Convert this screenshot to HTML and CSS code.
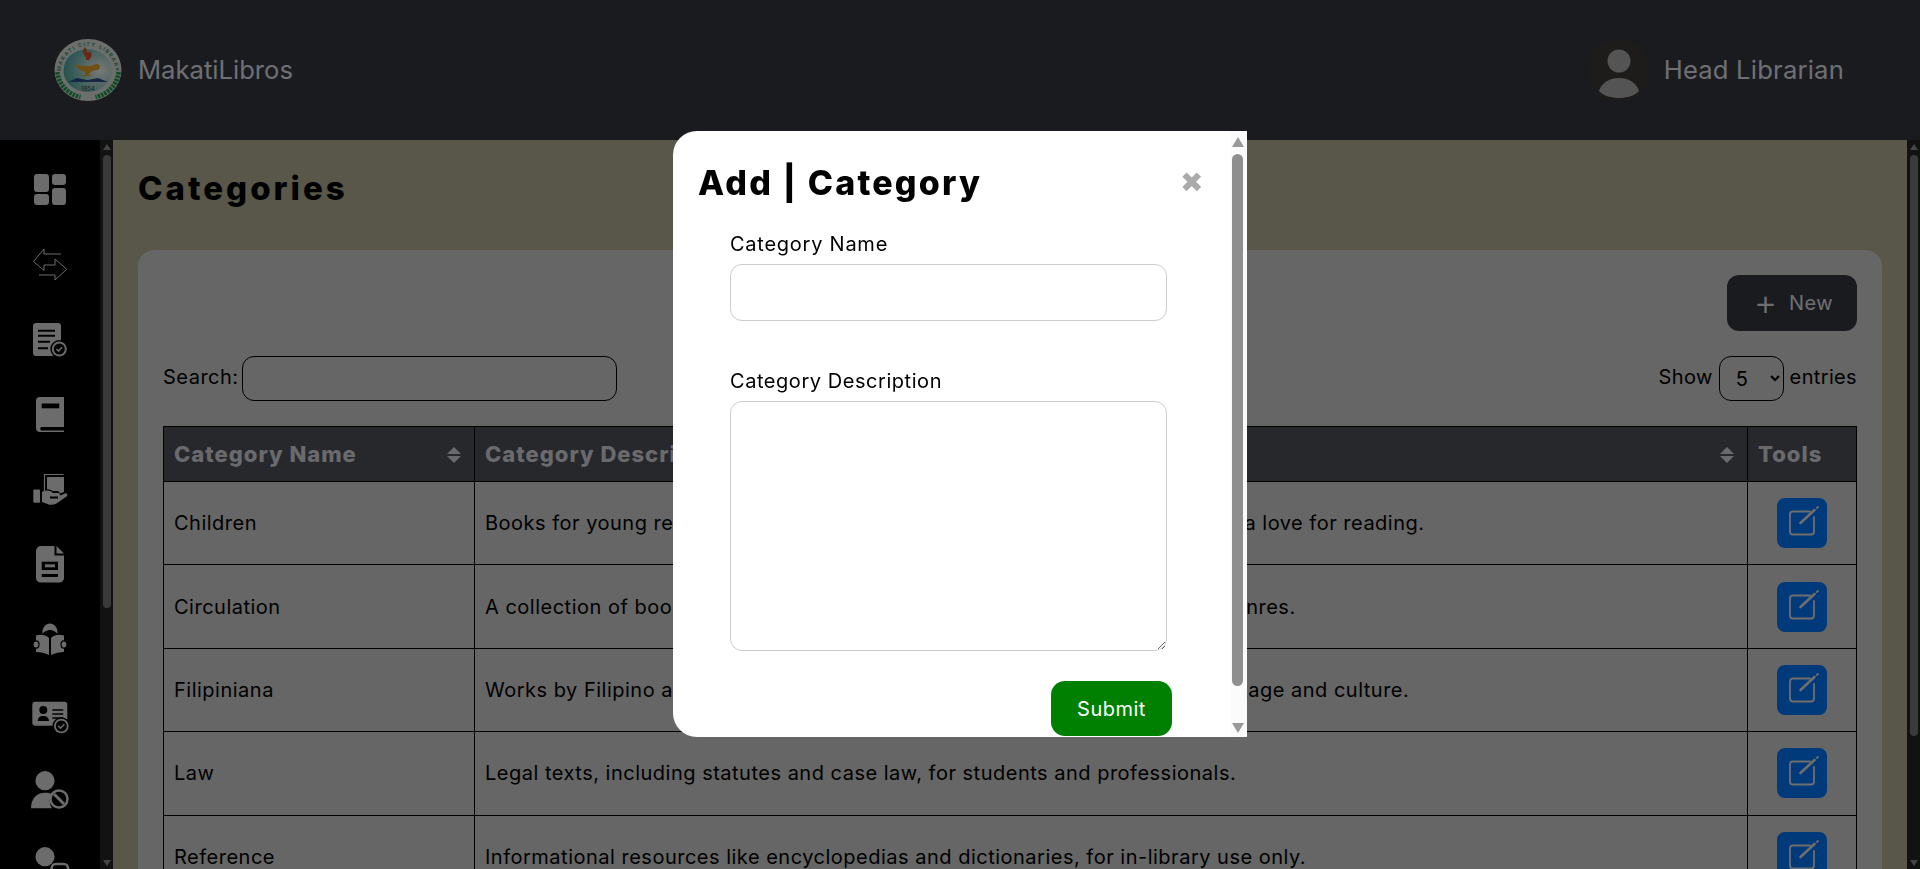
FILE: index.html
```html
<!DOCTYPE html>
<html lang="en">
<head>
    <meta charset="UTF-8">
    <meta name="viewport" content="width=device-width, initial-scale=1.0">
    <title>Categories</title>
    <link rel="stylesheet" href="styles.css">
</head>
<body>
    <header class="topbar">
        <div class="brand">
            <svg class="logo" viewBox="0 0 68 62">
                <defs>
                    <path id="sealArc" d="M6.5 34a27.5 27 0 0 1 55 0"/>
                    <radialGradient id="sealFill" cx="0.75" cy="0.5" r="0.8">
                        <stop offset="0" stop-color="#f2f2ee"/>
                        <stop offset="1" stop-color="#3d9f98"/>
                    </radialGradient>
                </defs>
                <ellipse cx="34" cy="31" rx="33.5" ry="31" fill="#d6dcd6"/>
                <text class="logo-text"><textPath href="#sealArc" textLength="82" startOffset="2%">MAKATI CITY LIBRARY</textPath></text>
                <ellipse cx="33.5" cy="31.5" rx="24" ry="21.5" fill="url(#sealFill)"/>
                <path d="M3.5 33c1 12 10 22 23 25M64.5 33c-1 12-10 22-23 25" fill="none" stroke="#1f9a4d" stroke-width="4.5" stroke-dasharray="2.5 1"/>
                <path d="M31 8c-2 3-3 5 0 9 1 2 1 3 1 4h3c3-3 4-7 0-9 0 2-1 2-2 1 0-2-1-3-2-5z" fill="#d9502a"/>
                <path d="M20 25c4 1 8 2 11 2h6c2-1 4-2 6-2 4 0 4 5 0 6l-5 1c-1 1-2 2-3 2v2h2v1H28v-1h3v-3c-4-1-8-4-11-8z" fill="#dd9f28"/>
                <path d="M14 43l9-4 10 2 1 0 10-2 10 4z" fill="#2c4f86"/>
                <text class="logo-year" x="34" y="52" text-anchor="middle">1954</text>
            </svg>
            <span class="brand-name">MakatiLibros</span>
        </div>
        <div class="user">
            <svg class="avatar" viewBox="0 0 64 64">
                <circle cx="32" cy="32" r="31" fill="#3b3935"/>
                <circle cx="32" cy="23" r="11.5" fill="#a8a8a8"/>
                <path d="M12 53c3-9 11-13 20-13s17 4 20 13c-5 5-12 7-20 7s-15-2-20-7z" fill="#a8a8a8"/>
            </svg>
            <span class="user-name">Head Librarian</span>
        </div>
    </header>

    <div class="layout">
        <nav class="sidebar">
            <a class="nav-item"><svg viewBox="0 0 38 38"><rect x="3" y="3" width="15" height="18" rx="3"/><rect x="21" y="3" width="14" height="11" rx="3"/><rect x="3" y="23" width="15" height="11" rx="3"/><rect x="21" y="17" width="14" height="17" rx="3"/></svg></a>
            <a class="nav-item"><svg viewBox="0 0 38 38" class="line-icon"><path d="M30 8H13V3L2.5 15.5 13 24.5V19h11"/><path d="M8 29h16v5l11.7-10.7L24 13v6"/></svg></a>
            <a class="nav-item"><svg viewBox="0 0 38 38"><rect x="2" y="2" width="28" height="33" rx="3"/><path class="cut" d="M7 9.7h17M7 14.7h17M7 20.7h12M7 27.3h10"/><circle class="cut-fill" cx="28.3" cy="28" r="9"/><circle cx="28.3" cy="28" r="7.5"/><circle class="cut-fill" cx="28.3" cy="28" r="5.5"/><path class="mark" d="M25.5 28l2 2 3.5-3.7"/></svg></a>
            <a class="nav-item"><svg viewBox="0 0 38 38"><path d="M9 1h24v30H10a2.5 2.5 0 0 0 0 3.5h23V36H9a4 4 0 0 1-4-4V5a4 4 0 0 1 4-4z"/><rect class="cut-fill" x="10.7" y="7.5" width="17.6" height="4.8"/></svg></a>
            <a class="nav-item"><svg viewBox="0 1 38 38"><path class="stroke" d="M13.5 22V4.5h19"/><path d="M16 7h17v15l-4 1.500c-.5-1.500-1.500-2.500-3-2.500h-4c-1.300-1-2.800-1.500-6-1.800z"/><rect x="2.300" y="19.500" width="6.700" height="13.200" rx="1"/><path d="M11 22c4-2 8-2 11 1h5c1.500 0 2.200 1.200 2 2.400l5-2c2-.6 3.400 1.800 1.500 3l-10 7c-3 1.600-6 2-9 .6l-5.500-2z"/><path class="cut" d="M19 27.500h8"/></svg></a>
            <a class="nav-item"><svg viewBox="0 1 38 38"><path d="M10 1h13.500v9.500H33V33a4.600 4.600 0 0 1-4.600 4.600H9.600A4.600 4.600 0 0 1 5 33V6a5 5 0 0 1 5-5z"/><path d="M25.500 1L33 8.500h-7.500z"/><rect class="cut-fill" x="10.700" y="16.700" width="16.300" height="8.300"/><rect x="14" y="19.300" width="10" height="3"/><rect class="cut-fill" x="10.700" y="29" width="16.300" height="3"/></svg></a>
            <a class="nav-item"><svg viewBox="0 1 38 38"><path d="M11.500 14c-.5-7 3.500-10.500 7.500-10.500S27 7 26.500 14c-2-3-5-4-7.500-4s-5.500 1-7.500 4z"/><path d="M5 15.500c5-1.500 10-.5 13 2.500v17c-4-2-9-3-13-3z"/><path d="M33 15.500c-5-1.500-10-.5-13 2.500v17c4-2 9-3 13-3z"/><ellipse class="hand" cx="5" cy="24.500" rx="3" ry="3.600"/><ellipse class="hand" cx="33" cy="24.500" rx="3" ry="3.600"/></svg></a>
            <a class="nav-item"><svg viewBox="0 -4 38 38"><rect x="1.300" y="1.700" width="35" height="24" rx="3"/><circle class="cut-fill" cx="12.300" cy="10" r="4"/><path class="cut-fill" d="M6.700 21c.5-4 2.500-5 5.600-5s5.200 1 5.700 5z"/><path class="cut thin" d="M21.300 10h11M21.300 14h11M21.300 18h11"/><circle class="cut-fill" cx="30.300" cy="26" r="8.800"/><circle cx="30.300" cy="26" r="7.300"/><circle class="cut-fill" cx="30.300" cy="26" r="5.500"/><path class="mark" d="M27.300 26l2.200 2.200 3.800-4"/></svg></a>
            <a class="nav-item"><svg viewBox="0 1 38 38"><circle cx="14" cy="10.700" r="9.600"/><path d="M0 38.300c0-10 6-15.600 14-15.600 3 0 5 .5 7 1.300-3 4-3 10 0 14.300z"/><circle class="ring" cx="28" cy="29" r="8.500"/><path class="bar" d="M23 24l10 10"/></svg></a>
            <a class="nav-item"><svg viewBox="0 0 38 38"><circle cx="14" cy="10.700" r="9.600"/><path d="M0 38c0-9 6-14 14-14h6v14z"/><rect class="ring" x="20.700" y="18" width="16.300" height="16" rx="4"/></svg></a>
        </nav>
        <div class="scrollbar scrollbar-nav">
            <span class="arrow-up"></span>
            <span class="thumb"></span>
            <span class="arrow-down"></span>
        </div>

        <main class="content">
            <h1 class="page-title">Categories</h1>
            <section class="card">
                <div class="card-actions">
                    <button class="btn-new"><span class="plus">+</span> New</button>
                </div>
                <div class="table-controls">
                    <label class="search">Search: <input type="text"></label>
                    <label class="entries">Show <select><option>5</option></select> entries</label>
                </div>
                <table class="data-table">
                    <thead>
                        <tr>
                            <th class="col-name">Category Name<span class="sort"></span></th>
                            <th>Category Description<span class="sort"></span></th>
                            <th class="col-tools">Tools</th>
                        </tr>
                    </thead>
                    <tbody>
                        <tr>
                            <td>Children</td>
                            <td>Books for young readers, including picture books and storybooks, to inspire a love for reading.</td>
                            <td class="col-tools"><a class="btn-edit"><svg viewBox="0 0 50 50"><path d="M33 13.500H16a3 3 0 0 0-3 3V33.500a3 3 0 0 0 3 3h18a3 3 0 0 0 3-3V19"/><path class="pen" d="M23.500 25L37.500 12"/><path d="M39.800 10L41 9"/></svg></a></td>
                        </tr>
                        <tr>
                            <td>Circulation</td>
                            <td>A collection of books for borrowing, across a wider range of subjects and genres.</td>
                            <td class="col-tools"><a class="btn-edit"><svg viewBox="0 0 50 50"><path d="M33 13.500H16a3 3 0 0 0-3 3V33.500a3 3 0 0 0 3 3h18a3 3 0 0 0 3-3V19"/><path class="pen" d="M23.500 25L37.500 12"/><path d="M39.800 10L41 9"/></svg></a></td>
                        </tr>
                        <tr>
                            <td>Filipiniana</td>
                            <td>Works by Filipino authors and books about the Philippines, their history, heritage and culture.</td>
                            <td class="col-tools"><a class="btn-edit"><svg viewBox="0 0 50 50"><path d="M33 13.500H16a3 3 0 0 0-3 3V33.500a3 3 0 0 0 3 3h18a3 3 0 0 0 3-3V19"/><path class="pen" d="M23.500 25L37.500 12"/><path d="M39.800 10L41 9"/></svg></a></td>
                        </tr>
                        <tr>
                            <td>Law</td>
                            <td>Legal texts, including statutes and case law, for students and professionals.</td>
                            <td class="col-tools"><a class="btn-edit"><svg viewBox="0 0 50 50"><path d="M33 13.500H16a3 3 0 0 0-3 3V33.500a3 3 0 0 0 3 3h18a3 3 0 0 0 3-3V19"/><path class="pen" d="M23.500 25L37.500 12"/><path d="M39.800 10L41 9"/></svg></a></td>
                        </tr>
                        <tr>
                            <td>Reference</td>
                            <td>Informational resources like encyclopedias and dictionaries, for in-library use only.</td>
                            <td class="col-tools"><a class="btn-edit"><svg viewBox="0 0 50 50"><path d="M33 13.500H16a3 3 0 0 0-3 3V33.500a3 3 0 0 0 3 3h18a3 3 0 0 0 3-3V19"/><path class="pen" d="M23.500 25L37.500 12"/><path d="M39.800 10L41 9"/></svg></a></td>
                        </tr>
                    </tbody>
                </table>
            </section>
        </main>
        <div class="scrollbar scrollbar-main">
            <span class="arrow-up"></span>
            <span class="thumb"></span>
            <span class="arrow-down"></span>
        </div>
    </div>

    <div class="overlay">
        <div class="modal">
            <div class="modal-body">
                <div class="modal-head">
                    <h2 class="modal-title">Add | Category</h2>
                    <span class="modal-close">&#10006;</span>
                </div>
                <form class="modal-form">
                    <label class="field-label">Category Name</label>
                    <input class="field-input" type="text">
                    <label class="field-label field-gap">Category Description</label>
                    <textarea class="field-area"></textarea>
                    <div class="form-actions">
                        <button class="btn-submit" type="button">Submit</button>
                    </div>
                </form>
            </div>
            <div class="modal-scroll">
                <span class="arrow-up"></span>
                <span class="thumb"></span>
                <span class="arrow-down"></span>
            </div>
        </div>
    </div>
</body>
</html>
```

FILE: styles.css
```css
/* Reset dan Gaya Dasar */
* {
    box-sizing: border-box;
}

html, body {
    height: 100%;
}

body {
    margin: 0;
    overflow: hidden;
    font-family: Inter, "Noto Sans", sans-serif;
    font-size: 20px;
    letter-spacing: 0.5px;
    color: #000;
    background: #b0ae92;
}

/* Header */
.topbar {
    height: 140px;
    padding: 0 76px 0 54px;
    display: flex;
    align-items: center;
    justify-content: space-between;
    background: #34363e;
}

.brand, .user {
    display: flex;
    align-items: center;
}

.logo {
    width: 68px;
    height: 62px;
    margin-right: 16px;
}

.logo-text {
    font-size: 5.2px;
    font-weight: 700;
    letter-spacing: 0;
    fill: #3b8f6a;
}

.logo-year {
    font-size: 6px;
    letter-spacing: 0;
    fill: #444;
}

.brand-name, .user-name {
    margin-top: -2px;
    font-size: 25.6px;
    letter-spacing: 0;
    color: #dedfe4;
}

.user-name {
    letter-spacing: 0.2px;
}

.avatar {
    width: 64px;
    height: 64px;
    margin-right: 13px;
}

/* Layout */
.layout {
    height: calc(100% - 140px);
    display: flex;
}

.sidebar {
    width: 100px;
    flex: none;
    padding-top: 12.5px;
    background: #000;
    overflow: hidden;
}

.nav-item {
    height: 75px;
    display: flex;
    align-items: center;
    justify-content: center;
}

.nav-item svg {
    width: 38px;
    height: 38px;
    overflow: visible;
    fill: #d8d8d8;
}

.nav-item .line-icon {
    fill: none;
    stroke: #d8d8d8;
    stroke-width: 1;
}

.nav-item .cut {
    fill: none;
    stroke: #000;
    stroke-width: 2;
}

.nav-item .cut.thin {
    stroke-width: 1.5;
}

.nav-item .cut-fill {
    fill: #000;
}

.nav-item .mark {
    fill: none;
    stroke: #d8d8d8;
    stroke-width: 1.6;
}

.nav-item .stroke {
    fill: none;
    stroke: #d8d8d8;
    stroke-width: 1.2;
}

.nav-item .hand {
    stroke: #000;
    stroke-width: 1.2;
}

.nav-item .ring {
    fill: #000;
    stroke: #d8d8d8;
    stroke-width: 2.5;
}

.nav-item .bar {
    fill: none;
    stroke: #d8d8d8;
    stroke-width: 3;
}

/* Scrollbars */
.scrollbar {
    width: 13px;
    flex: none;
    display: flex;
    flex-direction: column;
    align-items: center;
    padding: 4px 0 3px;
    background: #242424;
}

.scrollbar .thumb {
    width: 8px;
    margin-top: 5px;
    border-radius: 4px;
    background: #747474;
}

.scrollbar-nav .thumb {
    height: 453px;
}

.scrollbar-main .thumb {
    height: 581px;
}

.scrollbar .arrow-down {
    margin-top: auto;
}

.arrow-up {
    width: 0;
    height: 0;
    border: 4.5px solid transparent;
    border-top: 0;
    border-bottom: 6px solid #8a8a8a;
}

.arrow-down {
    width: 0;
    height: 0;
    border: 4.5px solid transparent;
    border-bottom: 0;
    border-top: 6px solid #8a8a8a;
}

/* Content */
.content {
    flex: 1;
    min-width: 0;
    padding: 24px 25px 0;
    overflow: hidden;
    background: #b0ae92;
}

.page-title {
    margin: 0 0 38px;
    height: 48px;
    line-height: 48px;
    font-size: 33px;
    font-weight: 800;
    letter-spacing: 3px;
}

.card {
    padding: 25px 25px 0;
    border-radius: 16px 16px 0 0;
    background: #ccc;
}

.card-actions {
    display: flex;
    justify-content: flex-end;
}

.btn-new {
    width: 130px;
    height: 56px;
    border: 0;
    border-radius: 12px;
    font: inherit;
    letter-spacing: inherit;
    color: #dedfe4;
    background: #34363e;
}

.plus {
    margin-right: 5px;
    margin-left: 3px;
    font-size: 36px;
    font-weight: 300;
    line-height: 20px;
    vertical-align: -5px;
}

.table-controls {
    margin: 25px 0 25px;
    display: flex;
    justify-content: space-between;
    align-items: center;
}

.search input {
    width: 375px;
    height: 45px;
    margin-left: -3px;
    border: 1px solid #000;
    border-radius: 12px;
    background: transparent;
    vertical-align: middle;
}

.entries {
    letter-spacing: 0.35px;
}

.entries select {
    width: 65px;
    height: 45px;
    padding-left: 12px;
    border: 1px solid #000;
    border-radius: 12px;
    font: inherit;
    background: transparent;
    vertical-align: middle;
}

/* Table Styling */
.data-table {
    width: 100%;
    border-collapse: collapse;
    table-layout: fixed;
}

.data-table th, .data-table td {
    padding: 0 10px;
    border: 1px solid #000;
    text-align: left;
}

.data-table th {
    position: relative;
    height: 55px;
    font-size: 22px;
    font-weight: 800;
    letter-spacing: 1px;
    color: #d4d4d8;
    background: #4e5058;
}

.data-table td {
    height: 83.4px;
}

.col-name {
    width: 311px;
}

.data-table .col-tools {
    width: 109px;
}

td.col-tools {
    text-align: center;
}

.sort {
    position: absolute;
    top: 20px;
    right: 13px;
    width: 0;
    height: 0;
    border: 7.5px solid transparent;
    border-top: 0;
    border-bottom: 7.5px solid #d4d4d8;
}

.sort::after {
    content: "";
    position: absolute;
    top: 9px;
    left: -7.5px;
    width: 0;
    height: 0;
    border: 7.5px solid transparent;
    border-bottom: 0;
    border-top: 7.5px solid #d4d4d8;
}

.btn-edit {
    width: 50px;
    height: 50px;
    display: inline-block;
    border-radius: 8px;
    background: #0074f4;
    vertical-align: middle;
}

.btn-edit svg {
    display: block;
    width: 50px;
    height: 50px;
    fill: none;
    stroke: #ddd;
    stroke-width: 1.8;
    stroke-linecap: round;
}

.btn-edit .pen {
    stroke-width: 2.6;
}

/* Modal */
.overlay {
    position: fixed;
    inset: 0;
    padding-bottom: 1px;
    display: flex;
    align-items: center;
    justify-content: center;
    background: rgba(0, 0, 0, 0.5);
}

.modal {
    position: relative;
    width: 574px;
    height: 606px;
    overflow: hidden;
    border-radius: 24px 0 0 24px;
    background: #fff;
}

.modal-body {
    padding: 26px 65px 0 25px;
}

.modal-head {
    display: flex;
    justify-content: space-between;
    align-items: center;
    height: 50px;
}

.modal-title {
    margin: 0;
    font-size: 34px;
    font-weight: 800;
    letter-spacing: 2.2px;
}

.modal-close {
    margin-right: -21px;
    font-size: 28px;
    color: #aaa;
}

.modal-form {
    padding: 25px 32px 0;
    display: flex;
    flex-direction: column;
}

.field-label {
    height: 24px;
    line-height: 24px;
    letter-spacing: 0.75px;
}

.field-gap {
    margin-top: 48px;
    letter-spacing: 0.55px;
}

.field-input, .field-area {
    width: 437px;
    margin-top: 8px;
    border: 1px solid #ccc;
    border-radius: 12px;
    background: #fff;
}

.field-input {
    height: 57px;
}

.field-area {
    height: 250px;
}

.form-actions {
    width: 442px;
    margin-top: 30px;
    display: flex;
    justify-content: flex-end;
}

.btn-submit {
    width: 121px;
    height: 55px;
    border: 0;
    border-radius: 14px;
    font: inherit;
    letter-spacing: inherit;
    color: #fff;
    background: #008000;
}

.modal-scroll {
    position: absolute;
    top: 0;
    right: 0;
    bottom: 0;
    width: 16px;
    padding: 6px 3px 4px 0;
    display: flex;
    flex-direction: column;
    align-items: center;
    background: #fbfbfb;
}

.modal-scroll .arrow-up {
    border-width: 6.5px;
    border-top: 0;
    border-bottom: 10px solid #9a9a9a;
}

.modal-scroll .arrow-down {
    margin-top: auto;
    border-width: 6.5px;
    border-bottom: 0;
    border-top: 10px solid #9a9a9a;
}

.modal-scroll .thumb {
    width: 11px;
    height: 532px;
    margin-top: 7px;
    border-radius: 6px;
    background: #8f8f8f;
}
```
